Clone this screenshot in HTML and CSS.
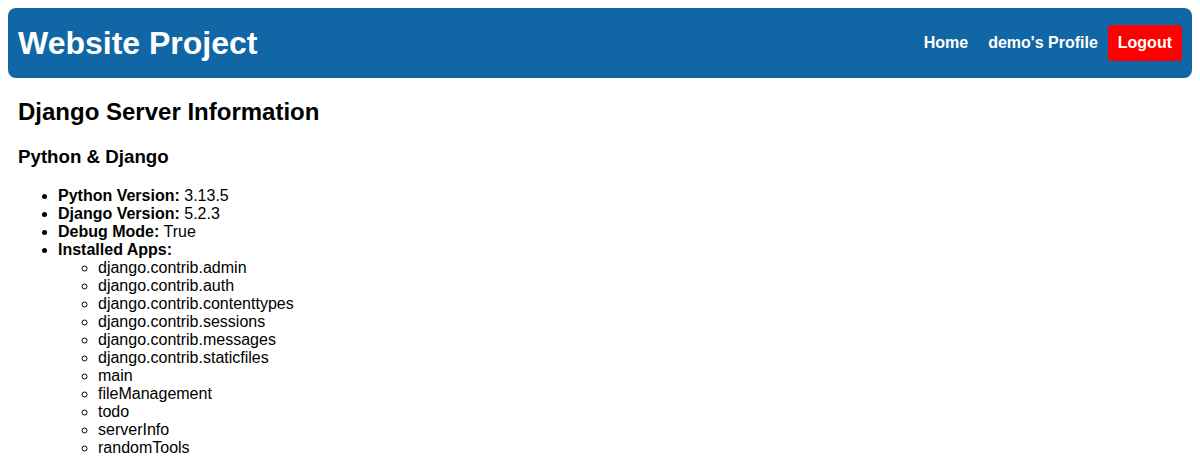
FILE: index.html
```html
<!DOCTYPE html>
<html>
<head>
<meta charset="utf-8">
<title>Server Info</title>
<link rel="stylesheet" href="styles.css">
</head>
<body>
<header class="topbar">
  <div class="brand">Website Project</div>
  <nav class="nav">
    <a class="nav-link" href="#">Home</a>
    <a class="nav-link" href="#">demo's Profile</a>
    <a class="nav-link logout" href="#">Logout</a>
  </nav>
</header>
<main class="content">
  <h2>Django Server Information</h2>
  <h3>Python &amp; Django</h3>
  <ul>
    <li><strong>Python Version:</strong> 3.13.5</li>
    <li><strong>Django Version:</strong> 5.2.3</li>
    <li><strong>Debug Mode:</strong> True</li>
    <li><strong>Installed Apps:</strong>
      <ul>
        <li>django.contrib.admin</li>
        <li>django.contrib.auth</li>
        <li>django.contrib.contenttypes</li>
        <li>django.contrib.sessions</li>
        <li>django.contrib.messages</li>
        <li>django.contrib.staticfiles</li>
        <li>main</li>
        <li>fileManagement</li>
        <li>todo</li>
        <li>serverInfo</li>
        <li>randomTools</li>
      </ul>
    </li>
  </ul>
</main>
</body>
</html>
```
FILE: styles.css
```css
body {
  margin: 8px;
  font-family: "Liberation Sans", Arial, sans-serif;
  color: #000;
  background: #fff;
}
.topbar {
  display: flex;
  align-items: center;
  justify-content: space-between;
  height: 70px;
  padding: 0 10px;
  background: #1166a5;
  border-radius: 8px;
}
.brand {
  color: #fff;
  font-size: 32px;
  font-weight: bold;
}
.nav {
  display: flex;
  align-items: center;
}
.nav-link {
  color: #fff;
  font-weight: bold;
  font-size: 16px;
  text-decoration: none;
  padding: 9px 10px;
  border-radius: 4px;
}
.logout {
  background: #ff0000;
}
.content {
  padding: 0 10px;
}
.content h2 {
  font-size: 24px;
  margin: 20px 0;
}
.content h3 {
  font-size: 18.72px;
  margin: 18.72px 0;
}
```
